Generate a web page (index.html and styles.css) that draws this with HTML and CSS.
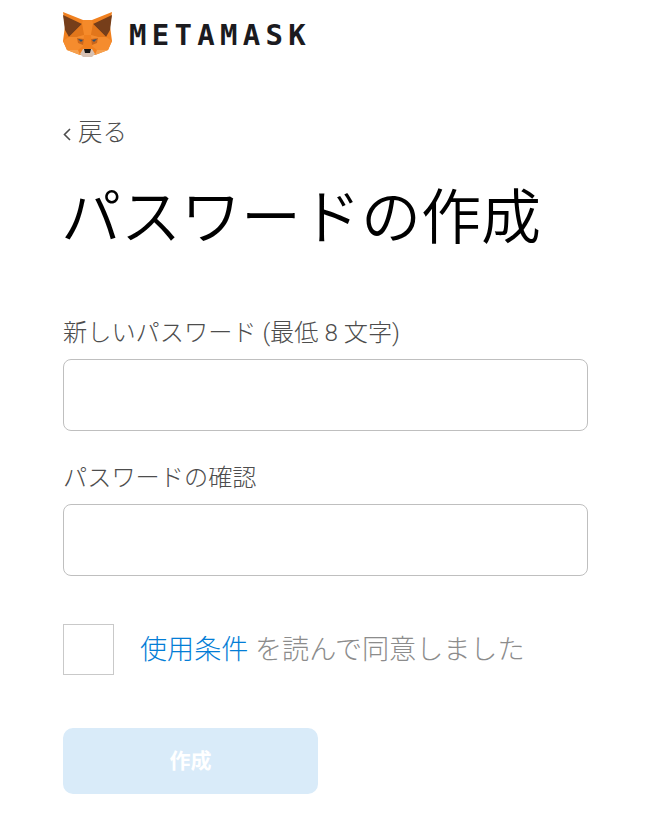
FILE: index.html
```html
<!DOCTYPE html>
<html lang="ja">
<head>
    <meta charset="UTF-8">
    <meta name="viewport" content="width=device-width, initial-scale=1.0">
    <title>パスワードの作成</title>
    <link rel="stylesheet" href="styles.css">
</head>
<body>

    <div class="container">
        <div class="logo">
            <svg class="fox" width="49" height="46" viewBox="0 0 49 46">
                <polygon fill="#f0801f" points="0,0 20,8 29,8 49,0 47,14 49,29 45,38 32,43 17,43 4,38 0,29 2,14"/>
                <polygon fill="#763e1a" points="0,3 19,12 6,25 2,18"/>
                <polygon fill="#763e1a" points="49,3 30,12 43,25 47,18"/>
                <polygon fill="#f58a2a" points="19,12 20,8 29,8 30,12 28,23 21,23"/>
                <polygon fill="#e2761b" points="6,25 19,12 21,23 14,25"/>
                <polygon fill="#e2761b" points="43,25 30,12 28,23 35,25"/>
                <polygon fill="#f58c2e" points="6,25 14,25 21,23 20,34 15,38 4,38 0,29"/>
                <polygon fill="#f58c2e" points="43,25 35,25 28,23 29,34 34,38 45,38 49,29"/>
                <polygon fill="#c9661c" points="14,26 21,27 20,33 15,31"/>
                <polygon fill="#c9661c" points="35,26 28,27 29,33 34,31"/>
                <polygon fill="#f6a04e" points="4,38 15,38 17,43"/>
                <polygon fill="#f6a04e" points="45,38 34,38 32,43"/>
                <polygon fill="#30506e" points="15,27 20,28 18,30"/>
                <polygon fill="#30506e" points="34,27 29,28 31,30"/>
                <polygon fill="#d7c1b3" points="17,42 20,37 29,37 32,42 29,45 20,45"/>
                <polygon fill="#161616" points="21,37 28,37 27,41 22,41"/>
            </svg>
            <span class="logo-text">METAMASK</span>
        </div>

        <a class="back" href="#">
            <svg class="back-arrow" width="8" height="13" viewBox="0 0 8 13">
                <polyline points="7,1 1.5,6.5 7,12" fill="none" stroke="#4d4d4d" stroke-width="1.6"/>
            </svg>
            戻る
        </a>

        <h1>パスワードの作成</h1>

        <label class="field-label" for="password">新しいパスワード (最低 8 文字)</label>
        <input class="field" type="password" id="password">

        <label class="field-label" for="confirm">パスワードの確認</label>
        <input class="field" type="password" id="confirm">

        <div class="terms">
            <span class="checkbox"></span>
            <span class="terms-text"><a href="#">使用条件</a> を読んで同意しました</span>
        </div>

        <button class="create" disabled>作成</button>
    </div>

</body>
</html>
```

FILE: styles.css
```css
body {
    background-color: white;
    font-family: Roboto, "Noto Sans CJK JP", sans-serif;
    font-weight: 300;
    margin: 0;
    color: #4d4d4d;
}

.container {
    width: 525px;
    padding: 12px 0 38px 63px;
}

.logo {
    display: flex;
    align-items: center;
    height: 46px;
}

.fox {
    flex: none;
}

.logo-text {
    margin-left: 17px;
    font-family: "DejaVu Sans Mono", monospace;
    font-size: 29px;
    font-weight: bold;
    letter-spacing: 5.3px;
    color: #1b1b1f;
}

.back {
    display: flex;
    align-items: center;
    margin-top: 58px;
    font-size: 24.5px;
    line-height: 34px;
    color: #4d4d4d;
    text-decoration: none;
}

.back-arrow {
    flex: none;
    margin: 2px 7px 0 0;
}

h1 {
    margin: 26px 0 0 -2px;
    font-size: 60px;
    font-weight: 350;
    line-height: 86px;
    color: #000;
}

.field-label {
    display: block;
    margin-top: 54px;
    margin-bottom: -1px;
    font-size: 24.2px;
    line-height: 34px;
}

.field-label + .field + .field-label {
    margin-top: 30px;
}

.field {
    display: block;
    box-sizing: border-box;
    width: 525px;
    height: 72px;
    margin-top: 10px;
    border: 1px solid #bfbfbf;
    border-radius: 8px;
    background: white;
}

.terms {
    display: flex;
    align-items: center;
    margin-top: 48px;
}

.checkbox {
    flex: none;
    box-sizing: border-box;
    width: 51px;
    height: 51px;
    border: 1px solid #c9c9c9;
}

.terms-text {
    margin-left: 26px;
    padding-bottom: 4px;
    font-size: 27.1px;
    color: #8c8c8c;
}

.terms-text a {
    color: #037dd6;
    text-decoration: none;
}

.create {
    display: block;
    width: 255px;
    height: 66px;
    margin-top: 53px;
    padding: 0 0 5px;
    border: none;
    border-radius: 10px;
    background-color: #d9ebf9;
    color: white;
    font-family: inherit;
    font-size: 21px;
    font-weight: bold;
}
```
